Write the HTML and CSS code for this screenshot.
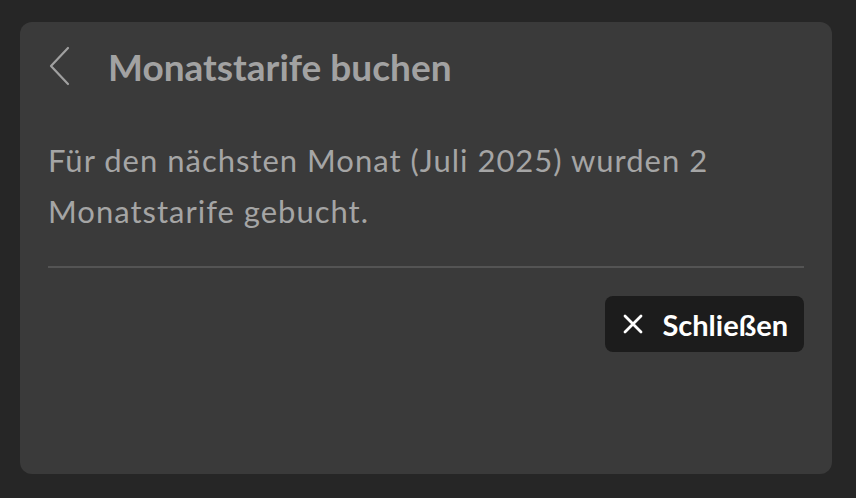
FILE: index.html
```html
<!DOCTYPE html>
<html lang="de">
<head>
  <meta charset="UTF-8">
  <meta name="viewport" content="width=device-width, initial-scale=1.0">
  <title>Monatstarife buchen</title>
  <link rel="stylesheet" href="styles.css">
</head>
<body>
  <div class="page">
    <div class="dialog">
      <div class="dialog-head">
        <button class="back" type="button" aria-label="Zurück">
          <svg width="22" height="40" viewBox="0 0 22 40">
            <path d="M20 2 L3 20 L20 38" fill="none" stroke="#a0a0a0" stroke-width="2.2" stroke-linecap="round" stroke-linejoin="round"/>
          </svg>
        </button>
        <h1 class="title">Monatstarife buchen</h1>
      </div>
      <p class="message">Für den nächsten Monat (Juli 2025) wurden 2 Monatstarife gebucht.</p>
      <hr class="divider">
      <div class="actions">
        <button class="close" type="button">
          <svg width="20" height="20" viewBox="0 0 20 20">
            <path d="M2 2 L18 18 M18 2 L2 18" stroke="#fff" stroke-width="2.8" stroke-linecap="round"/>
          </svg>
          <span>Schließen</span>
        </button>
      </div>
    </div>
  </div>
</body>
</html>
```

FILE: styles.css
```css
* {
  padding: 0;
  margin: 0;
  box-sizing: border-box;
}
html,body {
  width: 100%;
  height: 100%;
  background: #262626;
}
body {
  font-family: Lato, "Noto Sans", sans-serif;
}
.page {
  padding: 22px 24px 24px 20px;
}
.dialog {
  width: 812px;
  height: 452px;
  background: #3a3a3a;
  border-radius: 12px;
  padding: 22px 28px 0 28px;
}
.dialog-head {
  display: flex;
  align-items: center;
  height: 44px;
}
.back {
  background: none;
  border: 0;
  width: 60px;
  display: flex;
  justify-content: flex-start;
}
.title {
  font-size: 37px;
  font-weight: 700;
  color: #a2a2a2;
}
.message {
  margin-top: 47px;
  font-size: 31px;
  letter-spacing: 1px;
  line-height: 51px;
  color: #a5a5a5;
}
.divider {
  border: 0;
  border-top: 2px solid #545454;
  margin-top: 29px;
}
.actions {
  display: flex;
  justify-content: flex-end;
  margin-top: 28px;
}
.close {
  display: flex;
  align-items: center;
  gap: 19px;
  height: 56px;
  padding: 0 16px 0 18px;
  background: #1c1c1c;
  border: 0;
  border-radius: 8px;
  color: #fff;
  font-family: Lato, "Noto Sans", sans-serif;
  font-size: 29px;
  font-weight: 700;
}
.close svg {
  flex-shrink: 0;
}
```
